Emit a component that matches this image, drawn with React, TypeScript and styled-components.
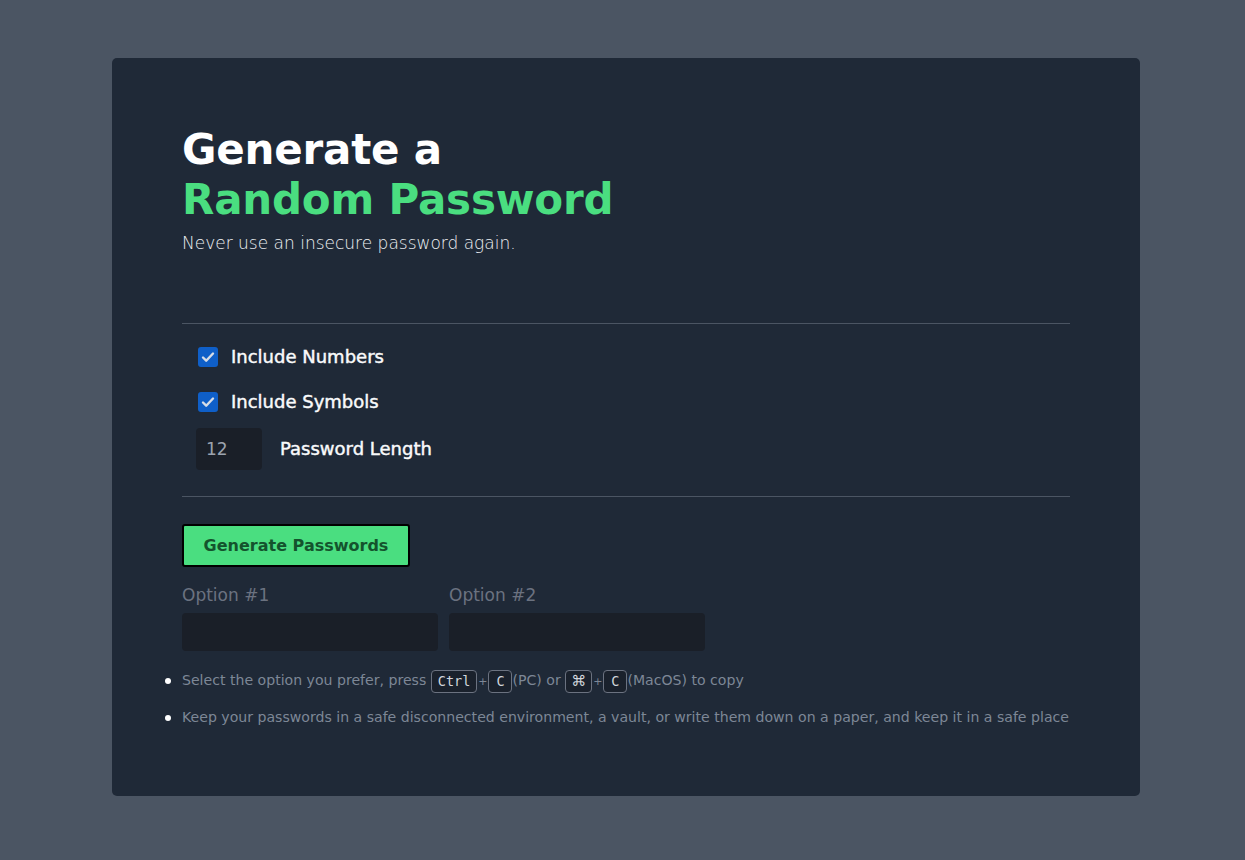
import styled, { createGlobalStyle } from "styled-components";

const GlobalStyle = createGlobalStyle`
  html, body {
    margin: 0;
    padding: 0;
    background: #4b5563;
    font-family: "DejaVu Sans", "Liberation Sans", sans-serif;
  }
`;

const Page = styled.main`
  min-height: 860px;
  padding: 58px 0 0 112px;
  box-sizing: border-box;
`;

const Card = styled.section`
  width: 1028px;
  box-sizing: border-box;
  background: #1f2937;
  border-radius: 5px;
  padding: 67px 70px 66px;
`;

const Title = styled.h1`
  margin: 0;
  font-size: 42px;
  line-height: 50px;
  font-weight: 700;
  color: #ffffff;
  letter-spacing: -0.2px;
`;

const Accent = styled.span`
  display: block;
  color: #4ade80;
`;

const Subtitle = styled.p`
  margin: 8px 0 0;
  font-size: 17px;
  font-weight: 300;
  color: #eef0f3;
`;

const Divider = styled.hr`
  margin: 0;
  border: 0;
  border-top: 1px solid #4b5563;
`;

const Settings = styled.div`
  margin-top: 70px;
  display: flex;
  flex-direction: column;
`;

const Fields = styled.div`
  display: flex;
  flex-direction: column;
  gap: 4px;
  padding: 12px 14px 25px;
`;

const Row = styled.label<{ $tall?: boolean }>`
  display: flex;
  align-items: center;
  gap: 13px;
  min-height: ${(p) => (p.$tall ? 45 : 41)}px;
  font-size: 18px;
  font-weight: 400;
  -webkit-text-stroke: 0.45px currentColor;
  color: #f9fafb;
`;

const CheckWrap = styled.span`
  position: relative;
  width: 20px;
  height: 20px;
  margin-left: 2px;

  svg {
    position: absolute;
    inset: 0;
    pointer-events: none;
  }
`;

const CheckBox = styled.input`
  appearance: none;
  margin: 0;
  width: 20px;
  height: 20px;
  border-radius: 3px;
  background: #0f5fc8;
`;

const LengthInput = styled.input`
  width: 66px;
  height: 42px;
  box-sizing: border-box;
  border: 0;
  border-radius: 4px;
  background: #1a1f28;
  color: #9ca3af;
  font: 400 17px "DejaVu Sans", sans-serif;
  -webkit-text-stroke: 0;
  padding: 0 10px;
  margin-right: 5px;
`;

const Actions = styled.div`
  padding-top: 27px;
`;

const GenerateButton = styled.button`
  width: 228px;
  height: 43px;
  background: #4ade80;
  border: 2px solid #000000;
  border-radius: 3px;
  color: #14532d;
  font: 700 16px "DejaVu Sans", sans-serif;
  cursor: pointer;
`;

const Options = styled.div`
  display: flex;
  gap: 11px;
  margin-top: 18px;
`;

const Option = styled.div`
  display: flex;
  flex-direction: column;
  gap: 8px;
  width: 256px;
`;

const OptionLabel = styled.span`
  font-size: 17px;
  color: #6b7280;
`;

const OptionField = styled.input`
  height: 38px;
  box-sizing: border-box;
  border: 0;
  border-radius: 4px;
  background: #1a1f28;
  color: #e5e7eb;
  font: 15px "DejaVu Sans Mono", monospace;
  padding: 0 10px;
`;

const Tips = styled.ul`
  margin: 17px 0 0;
  padding: 0;
  list-style: none;
  display: flex;
  flex-direction: column;
  gap: 11px;
`;

const Tip = styled.li`
  position: relative;
  font-size: 14.1px;
  color: #7d8796;
  line-height: 25px;
  white-space: nowrap;

  &::before {
    content: "";
    position: absolute;
    left: -17px;
    top: 10px;
    width: 6px;
    height: 6px;
    border-radius: 50%;
    background: #ffffff;
  }
`;

const Key = styled.kbd<{ $symbol?: boolean }>`
  display: inline-block;
  min-width: 10px;
  padding: 2px ${(p) => (p.$symbol ? 5 : 6)}px;
  border: 1px solid #6b7280;
  border-radius: 4px;
  background: #1a212c;
  color: #d1d5db;
  font: ${(p) =>
    p.$symbol
      ? `400 15px "DejaVu Sans", sans-serif`
      : `400 13.5px "DejaVu Sans Mono", monospace`};
  line-height: 17px;
  text-align: center;
  vertical-align: middle;
`;

const Plus = styled.span`
  font-size: 11px;
  margin: 0 1px;
`;

const Check = () => (
  <svg width="20" height="20" viewBox="0 0 20 20">
    <path
      d="M5 10.5l3.2 3.2L15 6.5"
      fill="none"
      stroke="#d7dde6"
      strokeWidth="2.4"
      strokeLinecap="round"
      strokeLinejoin="round"
    />
  </svg>
);

const App = () => {
  return (
    <Page>
      <GlobalStyle />
      <Card>
        <Title>
          Generate a<Accent>Random Password</Accent>
        </Title>
        <Subtitle>Never use an insecure password again.</Subtitle>

        <Settings>
          <Divider />
          <Fields>
            <Row>
              <CheckWrap>
                <CheckBox type="checkbox" defaultChecked />
                <Check />
              </CheckWrap>
              Include Numbers
            </Row>
            <Row>
              <CheckWrap>
                <CheckBox type="checkbox" defaultChecked />
                <Check />
              </CheckWrap>
              Include Symbols
            </Row>
            <Row $tall>
              <LengthInput type="number" defaultValue={12} />
              Password Length
            </Row>
          </Fields>
          <Divider />
        </Settings>

        <Actions>
          <GenerateButton>Generate Passwords</GenerateButton>
          <Options>
            <Option>
              <OptionLabel>Option #1</OptionLabel>
              <OptionField readOnly />
            </Option>
            <Option>
              <OptionLabel>Option #2</OptionLabel>
              <OptionField readOnly />
            </Option>
          </Options>
        </Actions>

        <Tips>
          <Tip>
            Select the option you prefer, press <Key>Ctrl</Key>
            <Plus>+</Plus>
            <Key>C</Key>(PC) or <Key $symbol>⌘</Key>
            <Plus>+</Plus>
            <Key>C</Key>(MacOS) to copy
          </Tip>
          <Tip>
            Keep your passwords in a safe disconnected environment, a vault, or
            write them down on a paper, and keep it in a safe place
          </Tip>
        </Tips>
      </Card>
    </Page>
  );
};

export default App;
